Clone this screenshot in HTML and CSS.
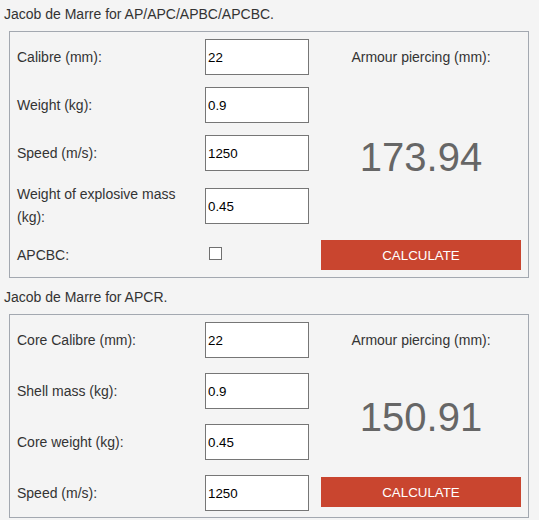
FILE: index.html
```html
<!DOCTYPE html>
<html lang="en">
<head>
<meta charset="utf-8">
<title>Jacob de Marre</title>
<link rel="stylesheet" href="styles.css">
</head>
<body>
<div class="page">
  <div class="calc-title">Jacob de Marre for AP/APC/APBC/APCBC.</div>
  <div class="calc-box">
    <div class="calc-form">
      <div class="field">
        <label class="field-label">Calibre (mm):</label>
        <input class="field-input" type="text" value="22">
      </div>
      <div class="field">
        <label class="field-label">Weight (kg):</label>
        <input class="field-input" type="text" value="0.9">
      </div>
      <div class="field">
        <label class="field-label">Speed (m/s):</label>
        <input class="field-input" type="text" value="1250">
      </div>
      <div class="field">
        <label class="field-label">Weight of explosive mass (kg):</label>
        <input class="field-input" type="text" value="0.45">
      </div>
      <div class="field field-check">
        <label class="field-label">APCBC:</label>
        <input class="check" type="checkbox">
      </div>
    </div>
    <div class="calc-result">
      <div class="result-label">Armour piercing (mm):</div>
      <div class="result-value">173.94</div>
      <button class="calc-btn" type="button">CALCULATE</button>
    </div>
  </div>

  <div class="calc-title">Jacob de Marre for APCR.</div>
  <div class="calc-box calc-box-apcr">
    <div class="calc-form">
      <div class="field">
        <label class="field-label">Core Calibre (mm):</label>
        <input class="field-input" type="text" value="22">
      </div>
      <div class="field">
        <label class="field-label">Shell mass (kg):</label>
        <input class="field-input" type="text" value="0.9">
      </div>
      <div class="field">
        <label class="field-label">Core weight (kg):</label>
        <input class="field-input" type="text" value="0.45">
      </div>
      <div class="field">
        <label class="field-label">Speed (m/s):</label>
        <input class="field-input" type="text" value="1250">
      </div>
    </div>
    <div class="calc-result">
      <div class="result-label">Armour piercing (mm):</div>
      <div class="result-value">150.91</div>
      <button class="calc-btn" type="button">CALCULATE</button>
    </div>
  </div>
</div>
</body>
</html>
```

FILE: styles.css
```css
html, body {
  margin: 0;
  padding: 0;
  background: #f4f4f4;
}

body {
  font-family: "Liberation Sans", Arial, sans-serif;
  font-size: 14px;
  color: #333;
}

.calc-title {
  padding: 3px 4px 5px;
  line-height: 23px;
}

.calc-box {
  display: flex;
  margin: 0 10px 5px 9px;
  border: 1px solid #a3a8b0;
  background: #f4f4f4;
}

.calc-form {
  width: 292px;
  padding: 7px 0 10px 7px;
}

.field {
  display: flex;
  align-items: center;
}

.field + .field {
  margin-top: 12px;
}

.field.field-check {
  margin-top: 15px;
}

.field-label {
  flex: 0 0 188px;
  box-sizing: border-box;
  padding-right: 8px;
  line-height: 23px;
}

.field-input {
  box-sizing: border-box;
  width: 104px;
  height: 36px;
  margin: 0;
  padding: 1px 2px;
  border: 1px solid #767676;
  border-radius: 0;
  background: #fff;
  color: #000;
  font-family: "Liberation Sans", Arial, sans-serif;
  font-size: 13.333px;
}

.check {
  -webkit-appearance: none;
  appearance: none;
  box-sizing: border-box;
  width: 13px;
  height: 13px;
  margin: 0 0 5px 4px;
  border: 1px solid #707070;
  border-radius: 0;
  background: #fff;
}

.calc-result {
  display: flex;
  flex-direction: column;
  align-items: center;
  width: 200px;
  margin-left: 12px;
  padding: 7px 7px 7px 0;
}

.result-label {
  line-height: 36px;
  color: #333;
}

.result-value {
  flex: 1;
  display: flex;
  align-items: center;
  font-size: 40px;
  color: #666;
}

.calc-btn {
  width: 200px;
  height: 30px;
  margin: 0;
  padding: 0;
  border: 0;
  background: #c9452f;
  color: #fff;
  font-family: "Liberation Sans", Arial, sans-serif;
  font-size: 13.333px;
}

.calc-box-apcr .calc-form {
  padding-bottom: 6px;
}

.calc-box-apcr .field + .field {
  margin-top: 15px;
}

.calc-box-apcr .calc-result {
  padding-bottom: 10px;
}
```
